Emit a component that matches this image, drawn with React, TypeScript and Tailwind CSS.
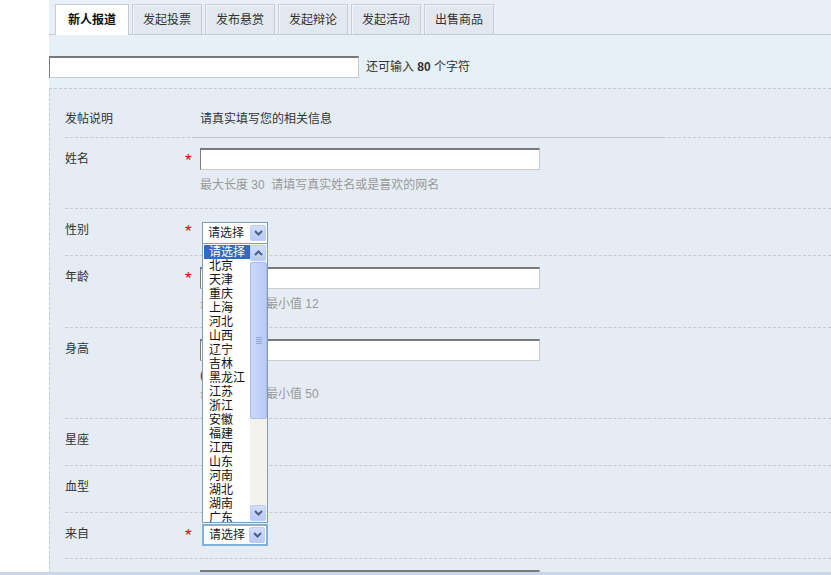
import React from 'react'

const FONT = { fontFamily: '"Liberation Sans", "Noto Sans CJK SC", sans-serif' }

const tabs = ['新人报道', '发起投票', '发布悬赏', '发起辩论', '发起活动', '出售商品']

const provinces = [
  '请选择', '北京', '天津', '重庆', '上海', '河北', '山西', '辽宁', '吉林', '黑龙江',
  '江苏', '浙江', '安徽', '福建', '江西', '山东', '河南', '湖北', '湖南', '广东',
]

function Chevron({ up = false }: { up?: boolean }) {
  return (
    <svg width="9" height="6" viewBox="0 0 9 6" className={up ? 'rotate-180' : ''}>
      <path d="M1 1 L4.5 4.5 L8 1" fill="none" stroke="#4d6185" strokeWidth="2" />
    </svg>
  )
}

function ArrowBtn({ up = false }: { up?: boolean }) {
  return (
    <div className="w-[16px] h-[16px] flex items-center justify-center border border-[#bccdf5] rounded-[2px] bg-gradient-to-b from-[#d3defc] to-[#b8caf6]">
      <Chevron up={up} />
    </div>
  )
}

function TextInput({ w = 340 }: { w?: number }) {
  return (
    <div
      className="h-[22px] bg-white border border-[#cbcbcb] border-t-[#7a7a7a] border-l-[#7a7a7a] border-t-2"
      style={{ width: w }}
    />
  )
}

function Select({ focused = false }: { focused?: boolean }) {
  return (
    <div
      className={`w-[66px] h-[22px] bg-white flex items-center justify-between pl-[5px] pr-[1px] ${
        focused ? 'border-2 border-[#7fb2d6]' : 'border border-[#7f9db9]'
      }`}
    >
      <span className="text-[12px] text-[#222] leading-none">请选择</span>
      <ArrowBtn />
    </div>
  )
}

function Star() {
  return <span className="text-[#e00] text-[17px] leading-[20px] translate-y-[3px]">*</span>
}

function Row({
  h,
  label,
  star = false,
  children,
}: {
  h: number
  label: string
  star?: boolean
  children?: React.ReactNode
}) {
  return (
    <div className="flex shrink-0 border-b border-dashed border-[#c3cad3]" style={{ height: h }}>
      <div className="w-[120px] pt-[11px] text-[12px] leading-[20px] text-[#333]">{label}</div>
      <div className="w-[15px] pt-[10px] flex">{star && <Star />}</div>
      <div className="flex-1 pt-[10px]">{children}</div>
    </div>
  )
}

function Hint({ children, mt = 5 }: { children: React.ReactNode; mt?: number }) {
  return (
    <div className="text-[12px] leading-[20px] text-[#999] whitespace-pre" style={{ marginTop: mt }}>
      {children}
    </div>
  )
}

export default function App() {
  return (
    <div className="w-[831px] h-[575px] overflow-hidden bg-white flex flex-col relative" style={FONT}>
      <div className="flex h-[572px] shrink-0 overflow-hidden">
        <div className="w-[49px] shrink-0 bg-white" />
        <div className="flex-1 flex flex-col bg-[#e8eff6] overflow-hidden">
          {/* tabs */}
          <div className="h-[35px] shrink-0 flex items-end gap-[3px] pl-[6px] border-b border-[#c4cbd3]">
            {tabs.map((t, i) =>
              i === 0 ? (
                <div
                  key={t}
                  className="w-[74px] h-[31px] -mb-px bg-white border border-b-0 border-[#c4cbd3] flex items-center justify-center text-[12px] font-bold text-[#111]"
                >
                  {t}
                </div>
              ) : (
                <div
                  key={t}
                  className="w-[70px] h-[30px] bg-[#e1e8ef] border border-b-0 border-[#c7ced6] shadow-[inset_1px_1px_0_#f3f6f9] flex items-center justify-center text-[12px] text-[#333]"
                >
                  {t}
                </div>
              )
            )}
          </div>

          {/* subject */}
          <div className="h-[53px] shrink-0 pt-[21px] flex items-start bg-[#e8f0f7]">
            <TextInput w={310} />
            <span className="ml-[7px] text-[12px] leading-[22px] text-[#333]">
              还可输入 <b className="font-bold">80</b> 个字符
            </span>
          </div>

          {/* form */}
          <div className="flex-1 flex flex-col bg-[#e5ecf3] border-t border-l border-dashed border-[#c3cad3] pl-[15px]">
            <div className="flex shrink-0 h-[49px]">
              <div className="w-[130px] pt-[20px] text-[12px] leading-[20px] text-[#333] border-b border-dashed border-[#c3cad3]">
                发帖说明
              </div>
              <div className="w-[468px] pt-[20px] pl-[5px] text-[12px] leading-[20px] text-[#333] border-b border-[#bdc4cc]">
                请真实填写您的相关信息
              </div>
              <div className="flex-1 border-b border-dashed border-[#c3cad3]" />
            </div>

            <Row h={71} label="姓名" star>
              <TextInput />
              <Hint>{'最大长度 30  请填写真实姓名或是喜欢的网名'}</Hint>
            </Row>

            <Row h={47} label="性别" star>
              <div className="ml-[2px] mt-[3px]">
                <Select />
              </div>
            </Row>

            <Row h={72} label="年龄" star>
              <div className="mt-px">
                <TextInput />
              </div>
              <Hint>{'最大值 100  最小值 12'}</Hint>
            </Row>

            <Row h={91} label="身高">
              <div className="mt-px">
                <TextInput />
              </div>
              <div className="text-[12px] leading-[20px] text-[#333] mt-[4px]">(厘米)</div>
              <Hint mt={-1}>{'最大值 250  最小值 50'}</Hint>
            </Row>

            <Row h={47} label="星座" />
            <Row h={47} label="血型" />

            <Row h={46} label="来自" star>
              <div className="ml-[2px] mt-px">
                <Select focused />
              </div>
            </Row>

            <div className="flex shrink-0 h-[20px]">
              <div className="w-[135px]" />
              <div className="pt-[11px]">
                <TextInput />
              </div>
            </div>
          </div>
        </div>
      </div>
      <div className="h-[3px] shrink-0 bg-[#c9d6e8]" />

      {/* open dropdown list */}
      <div className="absolute left-[202px] top-[243px] w-[66px] h-[280px] bg-white border border-[#7f9db9] flex overflow-hidden">
        <div className="flex-1 pt-px pl-px">
          {provinces.map((p, i) => (
            <div
              key={p}
              className={`h-[14px] pl-[5px] text-[12px] leading-[14px] whitespace-nowrap ${
                i === 0 ? 'bg-[#316ac5] text-white' : 'text-[#111]'
              }`}
            >
              {p}
            </div>
          ))}
        </div>
        <div className="w-[17px] flex flex-col bg-[#f4f2ec] pt-px">
          <ArrowBtn up />
          <div className="h-[157px] mt-px border border-[#a9bde8] rounded-[2px] bg-gradient-to-r from-[#c9d8fb] to-[#b9cbf6] flex items-center justify-center">
            <div className="flex flex-col gap-[1px]">
              <div className="w-[6px] h-px bg-[#8ea6dd]" />
              <div className="w-[6px] h-px bg-[#8ea6dd]" />
              <div className="w-[6px] h-px bg-[#8ea6dd]" />
              <div className="w-[6px] h-px bg-[#8ea6dd]" />
            </div>
          </div>
          <div className="flex-1" />
          <div className="mb-px">
            <ArrowBtn />
          </div>
        </div>
      </div>
    </div>
  )
}
